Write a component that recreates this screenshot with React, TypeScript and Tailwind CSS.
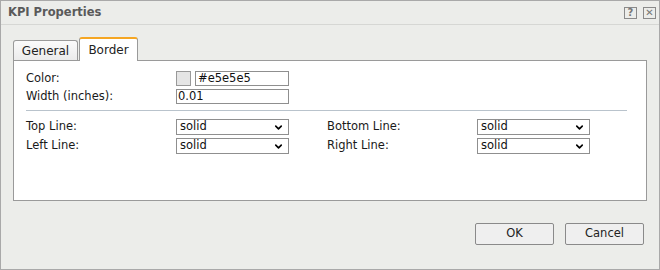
import React from "react";
import { ChevronDown } from "lucide-react";

const FONT = { fontFamily: "Tahoma, 'DejaVu Sans', sans-serif" };

function Select({ value }: { value: string }) {
  return (
    <div className="w-[113px] h-[16px] border border-[#8f8f8f] bg-white flex items-center justify-between pl-[3px] pr-[4px]">
      <span className="text-[11.5px] leading-none text-[#111]">{value}</span>
      <ChevronDown size={11} strokeWidth={3.5} className="text-black" />
    </div>
  );
}

function Label({ children }: { children: React.ReactNode }) {
  return <span className="text-[11.5px] leading-none text-[#1a1a1a]">{children}</span>;
}

export default function App() {
  return (
    <div className="w-[660px] h-[270px] bg-[#ecedea] border border-[#a9a9a9] flex flex-col" style={FONT}>
      <div className="h-[24px] shrink-0 border-b border-[#d6d7d4] flex items-center justify-between pl-[7px] pr-[3px]">
        <span className="text-[11.5px] font-bold text-[#5a5a5a]">KPI Properties</span>
        <div className="flex items-center gap-[6px]">
          <span className="w-[13px] h-[12px] border border-[#8a8a8a] flex items-center justify-center text-[10px] font-bold leading-none text-[#777]">?</span>
          <span className="w-[13px] h-[12px] border border-[#8a8a8a] flex items-center justify-center text-[10px] leading-none text-[#777]">✕</span>
        </div>
      </div>

      <div className="px-[12px] pt-[12px] flex flex-col">
        <div className="flex items-end gap-[1px] h-[23px]">
          <div className="w-[65px] h-[20px] border border-b-0 border-[#9a9a9a] rounded-t-[3px] bg-gradient-to-b from-[#fbfbfb] to-[#ebebeb] flex items-center justify-center text-[12px] text-[#222]">
            General
          </div>
          <div className="w-[59px] border border-b-0 border-[#9a9a9a] border-t-[2px] border-t-[#f5a623] rounded-t-[3px] bg-white flex items-center justify-center text-[12px] text-[#222] relative z-10 -mb-[1px] h-[24px]">
            Border
          </div>
        </div>
        <div className="h-[141px] bg-white border border-[#9a9a9a] pt-[10px] px-[12px]">
          <div className="grid grid-cols-[150px_113px] gap-y-[3px] items-center">
            <Label>Color:</Label>
            <div className="flex items-center gap-[4px]">
              <span className="w-[15px] h-[15px] border border-[#999] bg-[#e5e5e5]" />
              <div className="w-[94px] h-[15px] border border-[#8f8f8f] flex items-center pl-[2px] text-[11.5px] leading-none text-[#111]">#e5e5e5</div>
            </div>
            <Label>Width (inches):</Label>
            <div className="w-[113px] h-[15px] border border-[#8f8f8f] flex items-center pl-[1px] text-[11.5px] leading-none text-[#111]">0.01</div>
          </div>
          <div className="h-px bg-[#b9c3cc] mt-[6px] mb-[8px] mr-[7px]" />
          <div className="grid grid-cols-[150px_113px_38px_150px_113px] gap-y-[3px] items-center">
            <Label>Top Line:</Label>
            <Select value="solid" />
            <span />
            <Label>Bottom Line:</Label>
            <Select value="solid" />
            <Label>Left Line:</Label>
            <Select value="solid" />
            <span />
            <Label>Right Line:</Label>
            <Select value="solid" />
          </div>
        </div>
        <div className="flex justify-end gap-[11px] mt-[22px] pr-[3px]">
          <button className="w-[79px] h-[22px] border border-[#8a8a8a] rounded-[2px] bg-[#efefef] text-[11.5px] text-[#222]">OK</button>
          <button className="w-[79px] h-[22px] border border-[#8a8a8a] rounded-[2px] bg-[#efefef] text-[11.5px] text-[#222]">Cancel</button>
        </div>
      </div>
    </div>
  );
}
